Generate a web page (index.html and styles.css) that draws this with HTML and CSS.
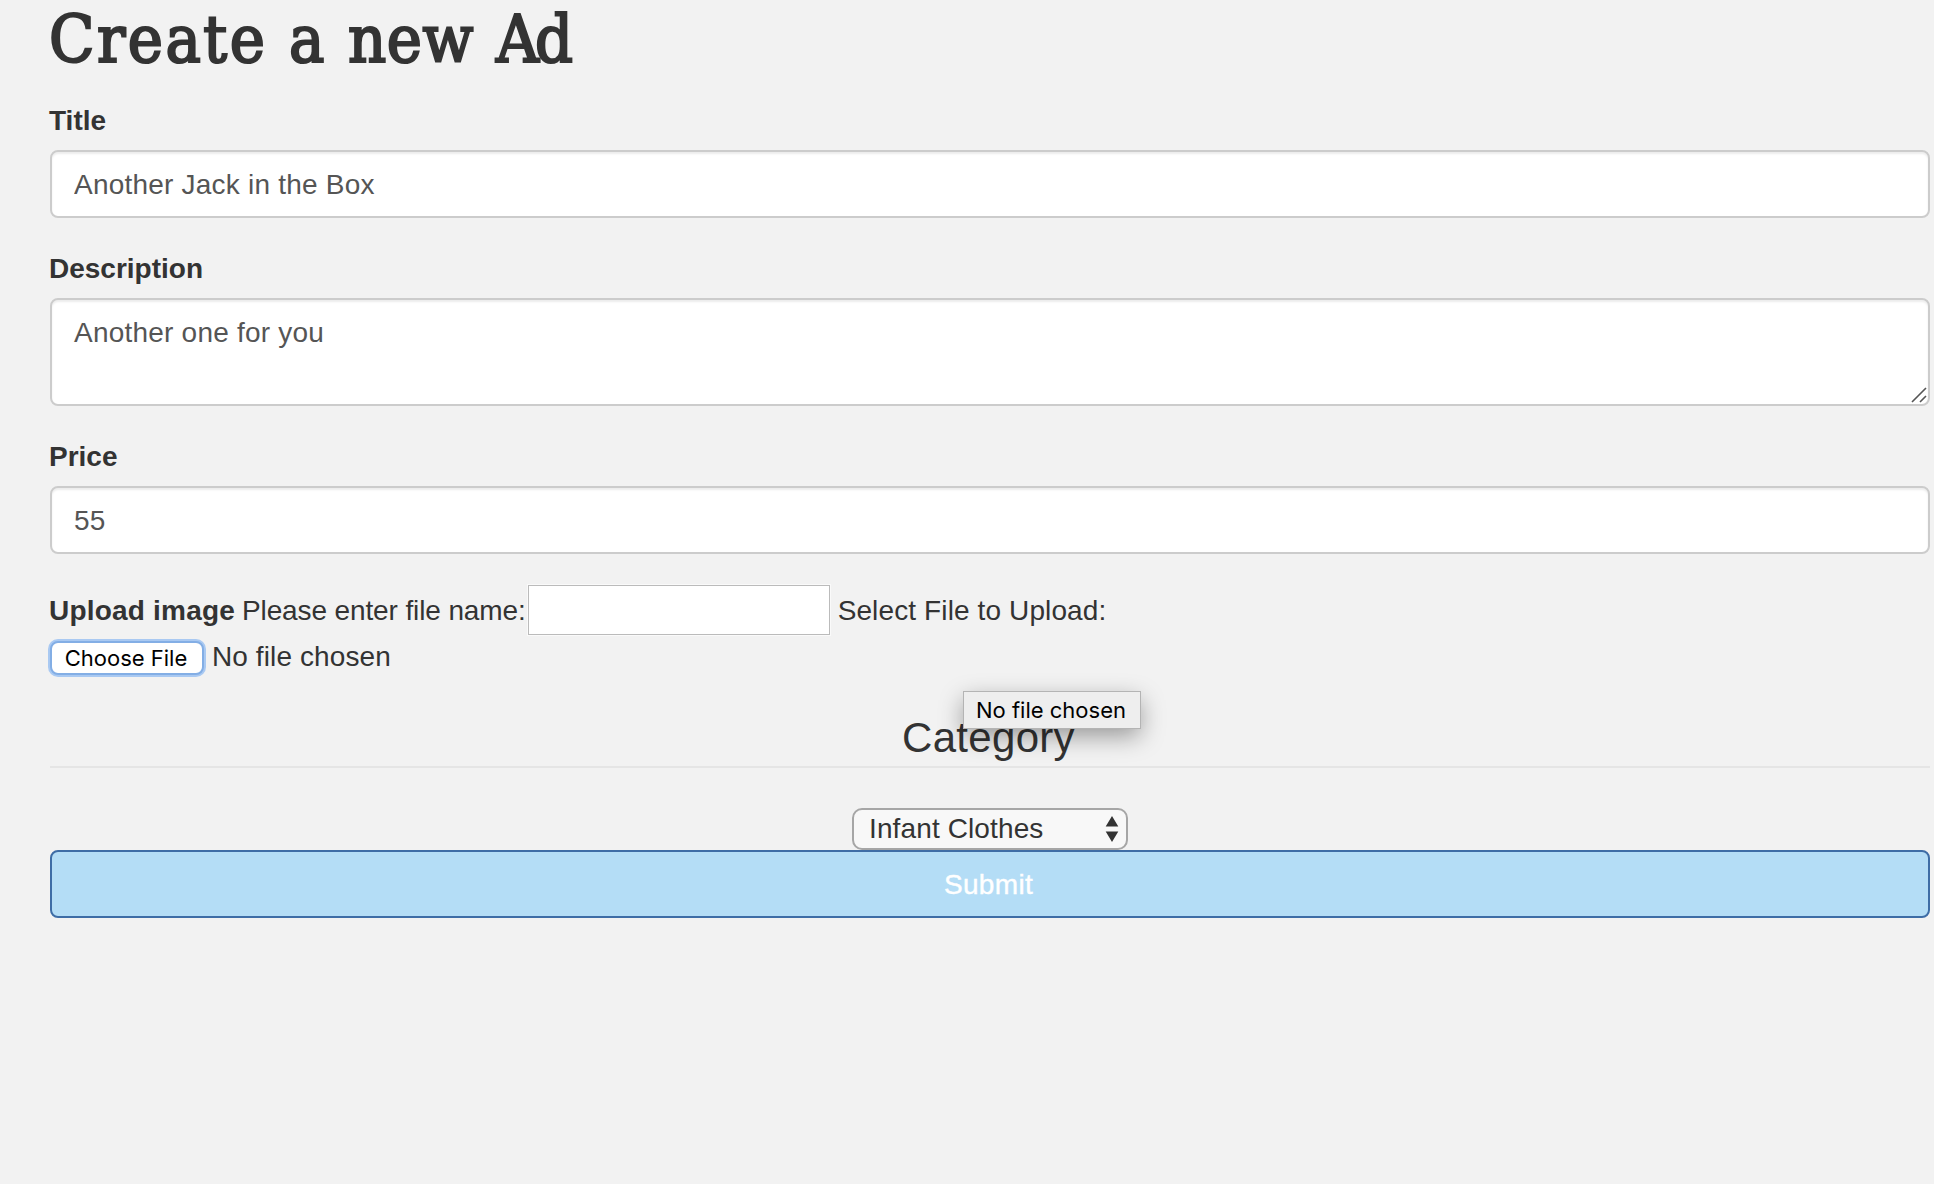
FILE: index.html
```html
<!DOCTYPE html>
<html lang="en">
<head>
<meta charset="utf-8">
<title>Create a new Ad</title>
<link rel="stylesheet" href="styles.css">
</head>
<body>
<form class="ad-form">
  <h1 class="heading"><span class="w-create">Create</span><span class="w-a">a</span><span class="w-new">new</span><span class="w-ad">Ad</span></h1>
  <div class="form-group">
    <label class="label" for="title">Title</label>
    <input class="control" id="title" type="text" value="Another Jack in the Box">
  </div>
  <div class="form-group">
    <label class="label" for="description">Description</label>
    <div class="area-wrap">
      <textarea class="control area" id="description">Another one for you</textarea>
      <svg class="grip" width="16" height="16" viewBox="0 0 16 16"><path d="M1 15L15 1M9 15L15 9" fill="none" stroke="#555" stroke-width="1.6"/></svg>
    </div>
  </div>
  <div class="form-group">
    <label class="label" for="price">Price</label>
    <input class="control" id="price" type="text" value="55">
  </div>
  <div class="upload-row">
    <label class="upload-label" for="filename">Upload image</label>
    <span class="prompt">Please enter file name:</span>
    <input class="filename" id="filename" type="text">
    <span class="select-prompt">Select File to Upload:</span>
  </div>
  <div class="file-row">
    <button class="choose" type="button">Choose File</button>
    <span class="no-file">No file chosen</span>
  </div>
  <div class="legend"><span class="legend-text">Category</span><span class="tooltip">No file chosen</span></div>
  <div class="select">
    <span class="select-value">Infant Clothes</span>
    <svg class="arrows" width="14" height="26" viewBox="0 0 14 26"><path d="M7 0L13.3 10.5H.7zM7 26L13.3 15.5H.7z" fill="#333"/></svg>
  </div>
  <button class="submit" type="button">Submit</button>
</form>
</body>
</html>
```
FILE: styles.css
```css
* { box-sizing: border-box; }
body {
  margin: 0;
  background: #f2f2f2;
  color: #333;
  font: 28px/40px "Liberation Sans", Arial, sans-serif;
  overflow: hidden;
}
.ad-form { padding: 0 4px 0 50px; display: flex; flex-direction: column; }
.heading {
  display: flex;
  align-items: flex-start;
  height: 100px;
  margin: 0 0 0 -1px;
  font: 400 66px/80px "DejaVu Serif Condensed", "DejaVu Serif", serif;
  font-stretch: condensed;
  -webkit-text-stroke: 2.2px #333;
  white-space: pre;
}
.w-create { width: 240px; letter-spacing: 2.5px; }
.w-a { width: 59px; }
.w-new { width: 148px; letter-spacing: .5px; }
.w-ad { letter-spacing: -4px; }
.form-group { display: flex; flex-direction: column; gap: 10px; margin-bottom: 30px; }
.label, .upload-label { margin-left: -1px; font-weight: 700; }
.label { display: block; height: 40px; padding-top: 1px; }
.upload-label { letter-spacing: .2px; }
.control {
  display: block;
  width: 100%;
  height: 68px;
  margin: 0;
  padding: 13px 22px 11px;
  border: 2px solid #ccc;
  border-radius: 8px;
  background: #fff;
  box-shadow: inset 0 2px 2px rgba(0, 0, 0, .075);
  color: #555;
  font: inherit;
  letter-spacing: .22px;
  outline: none;
}
.area-wrap { position: relative; }
.area { height: 108px; resize: none; overflow: hidden; }
.grip { position: absolute; right: 3px; bottom: 3px; }
.upload-row { display: flex; align-items: center; height: 52px; white-space: nowrap; }
.upload-label, .prompt, .select-prompt { padding-top: 1px; }
.prompt { margin-left: 7px; letter-spacing: -.12px; }
.filename {
  width: 302px;
  height: 50px;
  margin: 0 8px 0 2px;
  border: 1px solid #bbb;
  background: #fff;
  box-shadow: 0 0 0 1px #fafafa;
  outline: none;
}
.select-prompt { letter-spacing: .12px; }
.file-row { display: flex; align-items: flex-start; height: 70px; padding-top: 4px; gap: 8px; }
.choose {
  width: 154px;
  height: 34px;
  margin: 1px 0 0;
  padding: 0 2px 0 0;
  border: 2px solid #83aee5;
  border-radius: 8px;
  background: #fff;
  box-shadow: 0 0 0 2px #a9c9f2;
  color: #000;
  font: 22px/30px Inter, sans-serif;
}
.no-file { line-height: 34px; letter-spacing: .1px; }
.legend {
  position: relative;
  height: 62px;
  margin-bottom: 40px;
  border-bottom: 2px solid #e5e5e5;
  font-size: 42px;
  line-height: 63px;
  letter-spacing: .3px;
  text-align: center;
}
.legend-text { margin-right: 3px; }
.tooltip {
  position: absolute;
  left: 914px;
  top: -14px;
  width: 176px;
  height: 36px;
  padding-right: 2px;
  background: #eee;
  box-shadow: 0 0 0 1px #b4b4b4, 0 8px 24px rgba(0, 0, 0, .38);
  color: #000;
  font: 22px/36px Inter, sans-serif;
  letter-spacing: 0;
}
.select {
  display: flex;
  align-items: center;
  justify-content: space-between;
  align-self: center;
  width: 276px;
  height: 42px;
  padding: 0 7px 0 15px;
  border: 2px solid #a6a6a6;
  border-radius: 10px;
  background: #f8f8f8;
}
.select-value { letter-spacing: .12px; }
.submit {
  height: 68px;
  padding: 1px 3px 0 0;
  border: 2px solid #3e6da6;
  border-radius: 8px;
  background: #b4ddf6;
  color: #fff;
  font: inherit;
  letter-spacing: .35px;
  -webkit-text-stroke: .4px #fff;
}
```
